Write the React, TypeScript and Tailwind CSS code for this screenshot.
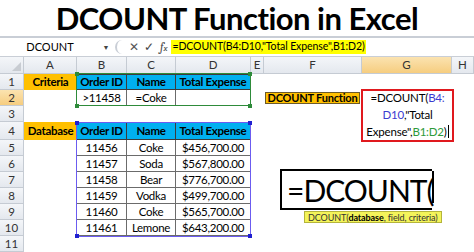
const cols = [24, 53, 50, 49, 75, 13, 98, 90, 22];
const rowH = [16, 16, 16, 18, 16, 16, 16, 16, 16, 16, 16];
const letters = ["A", "B", "C", "D", "E", "F", "G", "H"];

const data = [
  ["11456", "Coke", "$456,700.00"],
  ["11457", "Soda", "$567,800.00"],
  ["11458", "Bear", "$776,700.00"],
  ["11459", "Vodka", "$499,700.00"],
  ["11460", "Coke", "$565,700.00"],
  ["11461", "Lemone", "$643,200.00"],
];

const font = { fontFamily: "Lato, 'Open Sans', sans-serif" };

function Cell({
  children,
  className = "",
}: {
  children?: React.ReactNode;
  className?: string;
}) {
  return (
    <div
      className={`flex items-center overflow-hidden whitespace-nowrap text-[11.5px] tracking-[-0.3px] text-black ${className}`}
    >
      {children}
    </div>
  );
}

const hdrBg = "bg-gradient-to-b from-[#f4f6f9] to-[#e4e8ee]";
const hdrSel = "bg-gradient-to-b from-[#fbe3b0] to-[#f6cd7f]";

function rowCells(r: number) {
  const blue = "bg-[#00b0f0] font-bold justify-center border-r border-b border-[#3c3c3c]";
  const box = "justify-center border-r border-b border-[#6b6b6b]";
  const out: React.ReactNode[] = [];
  out.push(
    <div
      key="h"
      className={`flex items-center justify-center border-r border-b border-[#c5cbd3] text-[11.5px] text-[#333] ${
        r === 2 ? hdrSel : hdrBg
      }`}
    >
      {r}
    </div>
  );
  if (r === 1 || r === 4) {
    out.push(
      <Cell key="a" className="bg-[#ffc000] font-bold justify-center">
        {r === 1 ? "Criteria" : "Database"}
      </Cell>
    );
    out.push(<Cell key="b" className={`${blue} border-t`}>Order ID</Cell>);
    out.push(<Cell key="c" className={`${blue} border-t`}>Name</Cell>);
    out.push(<Cell key="d" className={`${blue} border-t`}>Total Expense</Cell>);
  } else if (r === 2) {
    out.push(<Cell key="a" />);
    out.push(<Cell key="b" className={box}>&gt;11458</Cell>);
    out.push(<Cell key="c" className={box}>=Coke</Cell>);
    out.push(<Cell key="d" className={box} />);
  } else if (r >= 5 && r <= 10) {
    const d = data[r - 5];
    out.push(<Cell key="a" />);
    out.push(<Cell key="b" className={box}>{d[0]}</Cell>);
    out.push(<Cell key="c" className={box}>{d[1]}</Cell>);
    out.push(<Cell key="d" className="border-r border-b border-[#6b6b6b] pl-[6px]">{d[2]}</Cell>);
  } else {
    out.push(<Cell key="a" />, <Cell key="b" />, <Cell key="c" />, <Cell key="d" />);
  }
  out.push(<Cell key="e" />);
  if (r === 2) {
    out.push(
      <div key="f" className="flex items-center py-[2px] pl-[1px] pr-[2px]">
        <div className="flex h-full w-full items-center justify-center whitespace-nowrap border border-[#6b5a2a] bg-[#ffc000] text-[11px] font-bold tracking-[-0.2px]">
          DCOUNT Function
        </div>
      </div>
    );
  } else {
    out.push(<Cell key="f" />);
  }
  out.push(<Cell key="g" />, <Cell key="h" />);
  return out;
}

function Corner({ x, y, color }: { x: number; y: number; color: string }) {
  return <div className={`absolute h-[4px] w-[4px] ${color}`} style={{ left: x - 2, top: y - 2 }} />;
}

export default function App() {
  return (
    <div className="relative h-[252px] w-[474px] overflow-hidden bg-white" style={font}>
      <div className="flex h-[36px] items-center justify-center pt-[1px] text-[31px] font-bold tracking-[-0.5px] text-black">
        DCOUNT Function in Excel
      </div>

      {/* formula bar */}
      <div className="flex h-[21px] items-center border-t-2 border-b border-[#c9ced6] bg-white text-black">
        <div className="flex h-full w-[100px] items-center justify-center text-[11px]">DCOUNT</div>
        <div className="flex w-[12px] items-center justify-center text-[7px] text-[#444]">▼</div>
        <div className="ml-[3px] h-[14px] w-[9px] rounded-l-full border-l-2 border-[#c9ced6]" />
        <div className="ml-[5px] text-[12px] text-[#555]">✕</div>
        <div className="ml-[5px] text-[12px] text-[#444]">✓</div>
        <div className="ml-[6px] font-serif text-[12px] italic text-[#444]">
          f<span className="text-[9px]">x</span>
        </div>
        <div className="ml-[4px] flex h-[14px] items-center whitespace-nowrap bg-[#ffff00] px-[1px] text-[10.5px] tracking-[-0.1px]">
          =DCOUNT(B4:D10,"Total Expense",B1:D2)
        </div>
      </div>

      {/* sheet */}
      <div className="relative">
        <div
          className="grid"
          style={{
            gridTemplateColumns: cols.map((c) => `${c}px`).join(" "),
            gridTemplateRows: ["17px", ...rowH.map((h) => `${h}px`)].join(" "),
          }}
        >
          <div className={`relative border-r border-b border-[#c5cbd3] ${hdrBg}`}>
            <div className="absolute right-[2px] bottom-[2px] h-0 w-0 border-b-[9px] border-l-[9px] border-b-[#c8ccd2] border-l-transparent" />
          </div>
          {letters.map((l) => (
            <div
              key={l}
              className={`flex items-center justify-center border-r border-b border-[#c5cbd3] text-[11.5px] text-[#333] ${
                l === "G" ? hdrSel : hdrBg
              }`}
            >
              {l}
            </div>
          ))}
          {rowH.map((_, i) => rowCells(i + 1))}
        </div>

        {/* range highlight B1:D2 */}
        <div className="absolute left-[76px] top-[16px] h-[33px] w-[175px] border border-[#2e8b3a]" />
        <Corner x={77} y={17} color="bg-[#2e8b3a]" />
        <Corner x={250} y={17} color="bg-[#2e8b3a]" />
        <Corner x={77} y={49} color="bg-[#2e8b3a]" />
        <Corner x={250} y={49} color="bg-[#2e8b3a]" />

        {/* range highlight B4:D10 */}
        <div className="absolute left-[76px] top-[65px] h-[115px] w-[175px] border border-[#6b5cf0]" />
        <Corner x={77} y={66} color="bg-[#2020d0]" />
        <Corner x={250} y={66} color="bg-[#2020d0]" />
        <Corner x={77} y={179} color="bg-[#2020d0]" />
        <Corner x={250} y={179} color="bg-[#2020d0]" />

        {/* in-cell editor */}
        <div className="absolute left-[361px] top-[32px] flex h-[53px] w-[93px] flex-col items-center justify-center whitespace-nowrap border-2 border-[#e0191e] bg-white text-center text-[11.5px] leading-[16.5px] tracking-[-0.2px] text-black">
          <div>
            =DCOUNT(<span className="text-[#3b3bd0]">B4:</span>
          </div>
          <div>
            <span className="text-[#3b3bd0]">D10</span>,"Total
          </div>
          <div>
            Expense",<span className="text-[#2e9a3a]">B1:D2</span>)
            <span className="ml-[1px] inline-block h-[13px] w-[1px] translate-y-[2px] bg-black" />
          </div>
        </div>

        {/* zoomed formula */}
        <div className="absolute left-[280px] top-[112px] flex h-[41px] w-[156px] items-start">
          <div className="flex h-full w-[152px] items-center whitespace-nowrap border-t-2 border-b-2 border-l-2 border-black bg-white pl-[5px] text-[30px] leading-none tracking-[-1px] text-black">
            =DCOUNT(
          </div>
          <div className="mt-[2px] h-[32px] w-[2px] bg-black" />
        </div>

        {/* tooltip */}
        <div className="absolute left-[304px] top-[154px] flex h-[12px] items-center whitespace-nowrap border border-[#b4b43c] bg-[#f4f45a] px-[3px] text-[9px] leading-none tracking-[-0.1px] text-[#333]">
          DCOUNT(<b className="text-black">database</b>, field, criteria)
        </div>
      </div>
    </div>
  );
}
